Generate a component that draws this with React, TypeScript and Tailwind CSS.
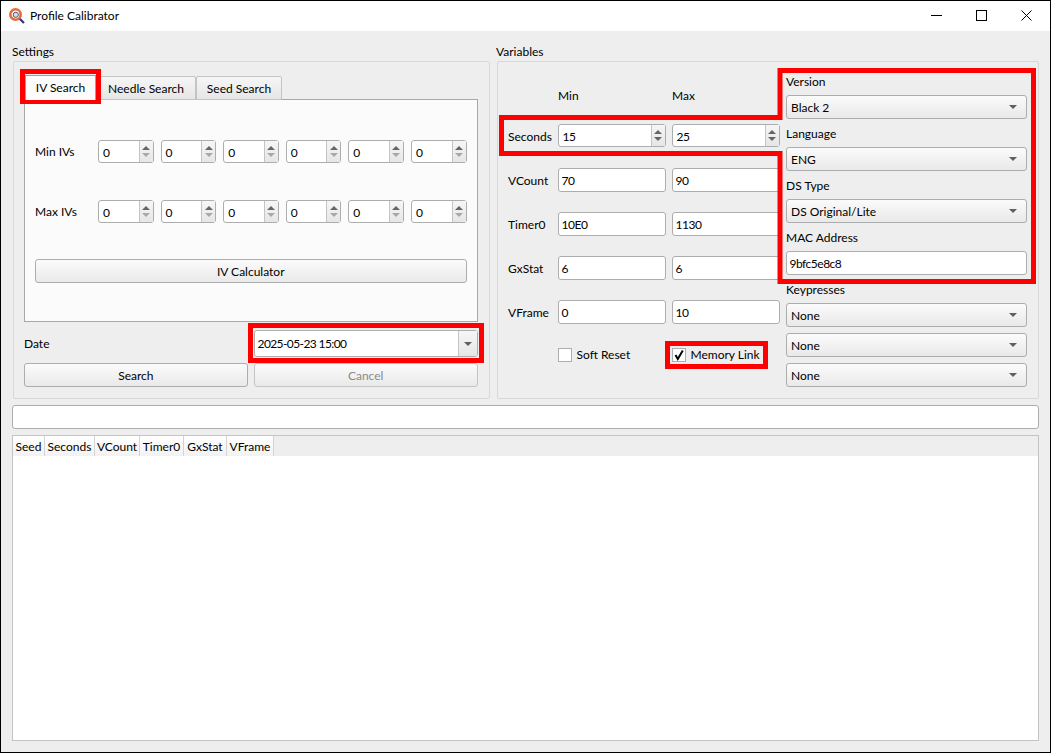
import * as React from "react"

function Arrow({ up = false, color = "#5f5f5f" }: { up?: boolean; color?: string }) {
    return (
        <svg width="8" height="4" viewBox="0 0 8 4" className="block">
            <polygon points={up ? "4,0 8,4 0,4" : "0,0 8,0 4,4"} fill={color} />
        </svg>
    )
}

function Spin({ value, atMin = false }: { value: string; atMin?: boolean }) {
    return (
        <div className="flex h-[23px] items-stretch rounded-[3px] border border-[#adadad] bg-white">
            <div className="flex flex-1 items-center pl-[4px] pt-[2px] tracking-[-0.5px]">{value}</div>
            <div className="flex w-[14px] flex-col items-center justify-center gap-[3px] border-l border-[#c4c4c4] bg-gradient-to-b from-[#f6f6f6] to-[#e6e6e6]">
                <Arrow up color="#666666" />
                <Arrow color={atMin ? "#a8a8a8" : "#666666"} />
            </div>
        </div>
    )
}

function Input({ value, className = "" }: { value: string; className?: string }) {
    return (
        <div className={"flex h-[24px] items-center rounded-[3px] border border-[#adadad] bg-white pl-[3px] pt-[2px] tracking-[-0.5px] " + className}>
            {value}
        </div>
    )
}

function Combo({ value }: { value: string }) {
    return (
        <div className="flex h-[24px] items-center justify-between rounded-[3px] border border-[#adadad] bg-gradient-to-b from-[#fbfbfb] to-[#e9e9e9] pl-[4px] pr-[9px]">
            <span className="pl-[0.5px] pt-[2px]">{value}</span>
            <Arrow />
        </div>
    )
}

function Btn({ label, disabled = false, className = "" }: { label: string; disabled?: boolean; className?: string }) {
    return (
        <div
            className={
                "flex h-[24px] items-center justify-center rounded-[3px] border bg-gradient-to-b from-[#fbfbfb] to-[#e9e9e9] pt-[2px] " +
                (disabled ? "border-[#c4c4c4] text-[#8a8a8a] " : "border-[#adadad] ") +
                className
            }
        >
            {label}
        </div>
    )
}

function IvRow({ label, className = "" }: { label: string; className?: string }) {
    return (
        <div className={"flex items-center " + className}>
            <div className="w-[63px]">{label}</div>
            <div className="grid flex-1 grid-cols-6 gap-[7px]">
                {[0, 1, 2, 3, 4, 5].map((i) => (
                    <Spin key={i} value="0" atMin />
                ))}
            </div>
        </div>
    )
}

function MinMaxRow({ label, min, max, className = "" }: { label: string; min: string; max: string; className?: string }) {
    return (
        <div className={"flex items-center " + className}>
            <div className="w-[50px] pl-[0.5px] pt-[2px]">{label}</div>
            <Input value={min} className="w-[108px]" />
            <Input value={max} className="ml-[6px] w-[108px]" />
        </div>
    )
}

const columns = [
    { name: "Seed", w: "w-[32px]" },
    { name: "Seconds", w: "w-[50px]" },
    { name: "VCount", w: "w-[45px]" },
    { name: "Timer0", w: "w-[44px]" },
    { name: "GxStat", w: "w-[43px]" },
    { name: "VFrame", w: "w-[47px]" },
]

export default function App() {
    return (
        <div className="relative flex h-[753px] w-[1051px] flex-col overflow-hidden border border-black bg-[#eeeeee] font-['Lato','Liberation_Sans',sans-serif] text-[12px] leading-[16px] text-black">
            {/* title bar */}
            <div className="flex h-[30px] shrink-0 items-center bg-white pb-[1px] pl-[8px]">
                <svg width="16" height="16" viewBox="0 0 16 16">
                    <path d="M9.5 9.5 L15 15" stroke="#3f2f7a" strokeWidth="2.2" />
                    <circle cx="6.5" cy="6.5" r="5.2" fill="#fff" stroke="#ea6a35" strokeWidth="2.6" />
                    <circle cx="6.8" cy="6.8" r="2.6" fill="#d5deec" stroke="#4a5a80" strokeWidth="1" />
                </svg>
                <span className="ml-[5px]">Profile Calibrator</span>
                <div className="ml-auto flex items-center pr-[18px]">
                    <svg width="11" height="11" viewBox="0 0 11 11" className="mr-[34px]">
                        <path d="M0 5.5 H11" stroke="#000" strokeWidth="1" />
                    </svg>
                    <svg width="11" height="11" viewBox="0 0 11 11" className="mr-[34px]">
                        <rect x="0.5" y="0.5" width="10" height="10" fill="none" stroke="#000" strokeWidth="1" />
                    </svg>
                    <svg width="11" height="11" viewBox="0 0 11 11">
                        <path d="M0.5 0.5 L10.5 10.5 M10.5 0.5 L0.5 10.5" stroke="#000" strokeWidth="1" />
                    </svg>
                </div>
            </div>

            <div className="flex flex-1 flex-col px-[11px] pt-[13px]">
                <div className="flex">
                    {/* Settings */}
                    <div className="w-[478px]">
                        <div className="h-[17px]">Settings</div>
                        <div className="ml-[1px] h-[338px] rounded-[2px] border border-[#d8d8d8] pl-[10px] pr-[11px] pt-[13px]">
                            <div className="flex h-[25px] items-end pl-[1px]">
                                <div className="z-10 flex h-[25px] w-[71px] items-center justify-center border-x border-t border-[#a0a0a0] bg-[#fbfbfb]">IV Search</div>
                                <div className="flex h-[24px] w-[100px] items-center justify-center rounded-t-[2px] border border-[#c4c4c4] bg-gradient-to-b from-[#f6f6f6] to-[#e6e6e6] pt-[2px]">Needle Search</div>
                                <div className="flex h-[24px] w-[86px] items-center justify-center rounded-t-[2px] border border-[#c4c4c4] bg-gradient-to-b from-[#f6f6f6] to-[#e6e6e6] pt-[2px]">Seed Search</div>
                            </div>
                            <div className="-mt-px h-[223px] border border-[#a8a8a8] bg-[#fbfbfb] px-[10px] pt-[40px]">
                                <IvRow label="Min IVs" />
                                <IvRow label="Max IVs" className="mt-[37px]" />
                                <Btn label="IV Calculator" className="mt-[36px]" />
                            </div>
                            <div className="mt-[8px] flex items-center justify-between">
                                <div>Date</div>
                                <div className="flex h-[27px] w-[224px] items-stretch rounded-[3px] border border-[#adadad] bg-white">
                                    <div className="flex flex-1 items-center pl-[3px] tracking-[-0.6px]">2025-05-23 15:00</div>
                                    <div className="flex w-[19px] items-center justify-center border-l border-[#c4c4c4] bg-gradient-to-b from-[#f6f6f6] to-[#e6e6e6]">
                                        <Arrow />
                                    </div>
                                </div>
                            </div>
                            <div className="mt-[6px] flex gap-[6px]">
                                <Btn label="Search" className="flex-1" />
                                <Btn label="Cancel" disabled className="flex-1" />
                            </div>
                        </div>
                    </div>

                    {/* Variables */}
                    <div className="ml-[6px] w-[544px]">
                        <div className="h-[17px] pl-[0.5px]">Variables</div>
                        <div className="ml-[1px] flex h-[338px] rounded-[2px] border border-[#d8d8d8] pl-[10px]">
                            <div className="w-[272px] pt-[26px]">
                                <div className="flex h-[16px]">
                                    <div className="ml-[50px] w-[114px] pl-[0.5px]">Min</div>
                                    <div className="pl-[0.5px]">Max</div>
                                </div>
                                <div className="mt-[20px] flex items-center">
                                    <div className="w-[50px] pl-[0.5px] pt-[2px]">Seconds</div>
                                    <div className="w-[108px]"><Spin value="15" /></div>
                                    <div className="ml-[6px] w-[108px]"><Spin value="25" /></div>
                                </div>
                                <MinMaxRow label="VCount" min="70" max="90" className="mt-[21px]" />
                                <MinMaxRow label="Timer0" min="10E0" max="1130" className="mt-[20px]" />
                                <MinMaxRow label="GxStat" min="6" max="6" className="mt-[20px]" />
                                <MinMaxRow label="VFrame" min="0" max="10" className="mt-[20px]" />
                                <div className="ml-[50px] mt-[23px] flex h-[16px] items-center">
                                    <div className="flex w-[114px] items-center gap-[5px]">
                                        <div className="h-[14px] w-[14px] border border-[#adadad] bg-white" />
                                        <span>Soft Reset</span>
                                    </div>
                                    <div className="flex items-center gap-[5px]">
                                        <div className="flex h-[14px] w-[14px] items-center justify-center border border-[#adadad] bg-white">
                                            <svg width="12" height="12" viewBox="0 0 12 12">
                                                <path d="M2.5 6 L4.8 10 L9.8 1.5" fill="none" stroke="#000" strokeWidth="2" />
                                            </svg>
                                        </div>
                                        <span>Memory Link</span>
                                    </div>
                                </div>
                            </div>
                            <div className="ml-[6px] w-[241px] pt-[12px]">
                                <div className="h-[16px] pl-[0.5px]">Version</div>
                                <div className="mt-[5px]"><Combo value="Black 2" /></div>
                                <div className="mt-[7px] h-[16px] pl-[0.5px]">Language</div>
                                <div className="mt-[5px]"><Combo value="ENG" /></div>
                                <div className="mt-[7px] h-[16px] pl-[0.5px]">DS Type</div>
                                <div className="mt-[5px]"><Combo value="DS Original/Lite" /></div>
                                <div className="mt-[7px] h-[16px] pl-[0.5px]">MAC Address</div>
                                <Input value="9bfc5e8c8" className="mt-[5px]" />
                                <div className="mt-[7px] h-[16px] pl-[0.5px]">Keypresses</div>
                                <div className="mt-[5px] flex flex-col gap-[6px]">
                                    <Combo value="None" />
                                    <Combo value="None" />
                                    <Combo value="None" />
                                </div>
                            </div>
                        </div>
                    </div>
                </div>

                <div className="mt-[6px] h-[24px] rounded-[3px] border border-[#adadad] bg-white" />

                {/* results table */}
                <div className="mt-[6px] flex h-[306px] flex-col border border-[#c4c4c4] bg-white">
                    <div className="flex h-[20px] bg-[#eeeeee]">
                        {columns.map((c) => (
                            <div
                                key={c.name}
                                className={"flex items-center justify-center border-r border-[#d4d4d4] bg-gradient-to-b from-[#ffffff] to-[#f2f2f2] pt-[2px] " + c.w}
                            >
                                {c.name}
                            </div>
                        ))}
                    </div>
                </div>
            </div>

            {/* red annotations */}
            <svg width="1051" height="753" className="pointer-events-none absolute -left-px -top-px">
                <g fill="none" stroke="#ff0000" strokeWidth="5">
                    <rect x="22.5" y="71.5" width="76" height="30" />
                    <rect x="250.5" y="325.5" width="231" height="35" />
                    <rect x="667.5" y="343.5" width="98" height="23" />
                    <polygon points="780,70.5 1033.5,70.5 1033.5,281.5 780,281.5 780,153.5 501.5,153.5 501.5,117.5 780,117.5" />
                </g>
            </svg>
        </div>
    )
}
